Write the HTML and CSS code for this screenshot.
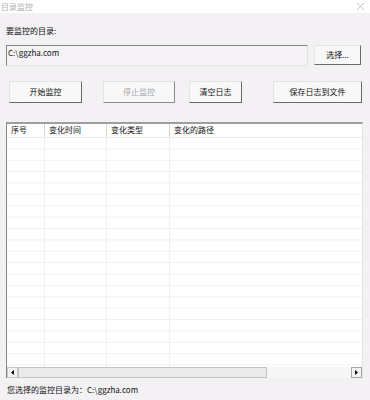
FILE: index.html
```html
<!DOCTYPE html>
<html lang="zh-CN">
<head>
  <meta charset="UTF-8">
  <meta name="viewport" content="width=device-width, initial-scale=1.0">
  <title>目录监控</title>
  <link rel="stylesheet" href="styles.css">
</head>
<body>

  <div class="titlebar">
    <span class="title">目录监控</span>
    <svg class="close" width="9" height="9" viewBox="0 0 9 9">
      <path d="M1 1 L8 8 M8 1 L1 8" stroke="#b4b4b4" stroke-width="0.8" fill="none"/>
    </svg>
  </div>

  <div class="client">
    <div class="label">要监控的目录:</div>

    <div class="dir-row">
      <div class="input">C:\ggzha.com</div>
      <button class="btn btn-choose">选择...</button>
    </div>

    <div class="actions">
      <button class="btn btn-start">开始监控</button>
      <button class="btn btn-stop" disabled>停止监控</button>
      <button class="btn btn-clear">清空日志</button>
      <button class="btn btn-save">保存日志到文件</button>
    </div>

    <div class="list">
      <div class="list-head">
        <div class="col col-1">序号</div>
        <div class="col col-2">变化时间</div>
        <div class="col col-3">变化类型</div>
        <div class="col col-4">变化的路径</div>
      </div>
      <div class="list-body">
        <div class="col col-1"></div>
        <div class="col col-2"></div>
        <div class="col col-3"></div>
        <div class="col col-4"></div>
      </div>
      <div class="hscroll">
        <div class="arrow">
          <svg width="3" height="5" viewBox="0 0 3 5"><path d="M3 0 L0 2.5 L3 5 Z" fill="#000"/></svg>
        </div>
        <div class="thumb"></div>
        <div class="track"></div>
        <div class="arrow arrow-right">
          <svg width="3" height="5" viewBox="0 0 3 5"><path d="M0 0 L3 2.5 L0 5 Z" fill="#000"/></svg>
        </div>
      </div>
    </div>

    <div class="status">您选择的监控目录为：C:\ggzha.com</div>
  </div>

</body>
</html>
```

FILE: styles.css
```css
body {
  margin: 0;
  width: 370px;
  height: 400px;
  background-color: #f4f1f4;
  font-family: "Noto Sans CJK SC", "Noto Sans", sans-serif;
  font-size: 8px;
  color: #111;
  overflow: hidden;
}

.titlebar {
  height: 13px;
  background-color: #fff;
  display: flex;
  align-items: center;
  justify-content: space-between;
  padding: 0 5px 0 1px;
}
.title {
  color: #b0b0b0;
  line-height: 11px;
}
.close {
  display: block;
}

.client {
  padding: 0 7px 0 6px;
}

.label {
  margin-top: 13px;
  line-height: 10px;
}

.dir-row {
  display: flex;
  align-items: flex-start;
  margin-top: 9px;
}
.input {
  width: 302px;
  height: 19px;
  padding: 2px 0 0 1px;
  box-sizing: border-box;
  height: 21px;
  border: 1px solid;
  border-color: #858585 #e2e2e2 #e2e2e2 #858585;
  background-color: #f6f3f6;
  line-height: 10px;
}

.btn {
  font-family: inherit;
  font-size: 8px;
  color: #111;
  padding: 0;
  margin: 0;
  height: 22px;
  background-color: #f9f8f9;
  border: 1px solid;
  border-color: #e4e4e4 #6a6a6a #6a6a6a #e4e4e4;
  box-sizing: border-box;
  line-height: 10px;
}
.btn:disabled {
  color: #a8a8a8;
  border-color: #e4e4e4 #8c8c8c #8c8c8c #e4e4e4;
}
.btn-choose {
  width: 47px;
  height: 20px;
  margin-left: 6px;
}

.actions {
  display: flex;
  margin-top: 15px;
}
.btn-start { width: 73px; margin-left: 3px; }
.btn-stop  { width: 72px; margin-left: 21px; }
.btn-clear { width: 53px; margin-left: 14px; }
.btn-save  { width: 89px; margin-left: 31px; }

.list {
  margin-top: 19px;
  width: 357px;
  height: 256px;
  box-sizing: border-box;
  border-top: 2px solid #9e9e9e;
  border-left: 1px solid #858585;
  border-right: 1px solid #e6e3e6;
  background-color: #fff;
  display: flex;
  flex-direction: column;
}

.list-head {
  display: flex;
  height: 13px;
  line-height: 12px;
  border-bottom: 1px solid #ececec;
}
.list-head .col {
  padding-left: 4px;
  border-right: 1px solid #d6d6d6;
  box-sizing: border-box;
}
.list-head .col-4 {
  border-right: none;
}

.col-1 { width: 38px; }
.col-2 { width: 62px; }
.col-3 { width: 63px; }
.col-4 { flex: 1; }

.list-body {
  flex: 1;
  display: flex;
  background-image: linear-gradient(to bottom, transparent 10.4px, #f0f0f0 10.4px);
  background-size: 100% 11.375px;
}
.list-body .col {
  border-right: 1px solid #f0f0f0;
  box-sizing: border-box;
}
.list-body .col-4 {
  border-right: none;
}

.hscroll {
  height: 11px;
  display: flex;
  background-color: #f0f0f0;
}
.arrow {
  width: 11px;
  height: 11px;
  box-sizing: border-box;
  border: 1px solid #c8c8c8;
  background-color: #f2f2f2;
  display: flex;
  align-items: center;
  justify-content: center;
}
.thumb {
  width: 249px;
  box-sizing: border-box;
  border: 1px solid #c2c2c2;
  background-color: #ebebeb;
}
.track {
  flex: 1;
  background-color: #f6f6f6;
}
.arrow-right {
  border-color: #a8a8a8;
}

.status {
  margin-top: 7px;
  padding-left: 1px;
  line-height: 10px;
}
```
